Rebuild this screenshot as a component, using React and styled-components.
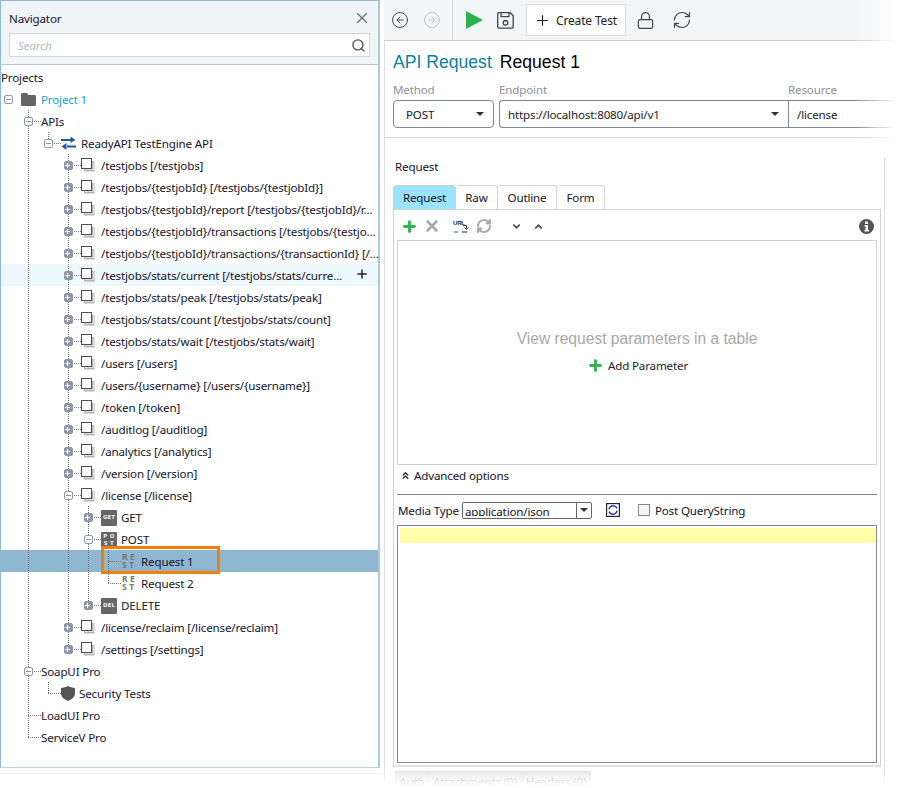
import React from 'react';
import styled, { createGlobalStyle, css } from 'styled-components';
import { X, Search, Plus, Lock, RefreshCw, CircleArrowLeft, CircleArrowRight, ChevronDown, ChevronUp, ChevronsUp } from 'lucide-react';

const GlobalStyle = createGlobalStyle`
  html, body { margin: 0; padding: 0; background: #fff; }
  body { font-family: "Noto Sans", "Open Sans", sans-serif; font-size: 11.6px; letter-spacing: -0.16px; color: #14142a; }
`;

const dots = '#777';
const vLine = `repeating-linear-gradient(to bottom, ${dots} 0 1px, transparent 1px 2px)`;
const hLine = `repeating-linear-gradient(to right, ${dots} 0 1px, transparent 1px 2px)`;

const Page = styled.div`
  position: relative;
  width: 901px;
  height: 788px;
  overflow: hidden;
  display: flex;
  background: #fff;
`;

/* navigator */
const Navigator = styled.aside`
  width: 380px;
  height: 768px;
  flex: none;
  box-sizing: border-box;
  border: 1px solid #8fb9d4;
  border-bottom-color: #b9d2e2;
  border-right-width: 2px;
  border-right-color: #a9cade;
  box-shadow: 0 5px 0 #fff, 0 6px 0 #e8e8e8;
  display: flex;
  flex-direction: column;
`;
const NavHead = styled.header`
  height: 64px;
  flex: none;
  box-sizing: border-box;
  background: #f2f5f8;
  border-bottom: 1px solid #b7c7d3;
  padding: 8px 8px 0;
`;
const NavTitleRow = styled.div`
  display: flex;
  justify-content: space-between;
  align-items: center;
  height: 18px;
  margin-bottom: 6px;
  svg { margin-right: -1px; color: #666; }
`;
const SearchBox = styled.div`
  height: 24px;
  box-sizing: border-box;
  background: #fff;
  border: 1px solid #d0d6db;
  display: flex;
  align-items: center;
  justify-content: space-between;
  padding: 0 3px 0 8px;
  color: #b5b8bc;
  font-style: italic;
  svg { color: #555; }
`;
const ProjectsLabel = styled.div`
  height: 23px;
  flex: none;
  line-height: 25px;
`;
const Tree = styled.div`
  display: flex;
  flex-direction: column;
`;
const Row = styled.div`
  position: relative;
  height: 22px;
  flex: none;
  display: flex;
  align-items: center;
  padding-left: 7px;
  white-space: nowrap;
  background: ${p => (p.$selected ? '#8eb6d0' : p.$hover ? '#ecf8fc' : 'transparent')};
`;
const Guide = styled.span`
  width: 20px;
  height: 22px;
  flex: none;
  ${p => p.$on && css`
    background: ${vLine} 0 0 / 1px 100% no-repeat;
  `}
`;
const Node = styled.span`
  width: 13px;
  height: 22px;
  flex: none;
  display: flex;
  align-items: center;
  background:
    ${hLine} 0 11px / 13px 1px no-repeat,
    ${vLine} 0 0 / 1px ${p => (p.$last ? '11px' : '100%')} no-repeat;
  ${p => p.$root && css`background: none;`}
`;
const Expander = styled.span`
  width: 9px;
  height: 9px;
  margin-left: -4px;
  box-sizing: border-box;
  border-radius: 2px;
  display: flex;
  align-items: center;
  justify-content: center;
  background: ${p => (p.$open ? '#fff' : '#8e97a8')};
  border: 1px solid #8e97a8;
  &::after {
    content: '';
    width: 5px;
    height: 1px;
    background: ${p => (p.$open ? '#8e97a8' : '#fff')};
  }
  ${p => !p.$open && css`
    &::before {
      content: '';
      width: 1px;
      height: 5px;
      background: #fff;
      margin-right: -3px;
    }
  `}
`;
const IconSlot = styled.span`
  width: ${p => (p.$tight ? 18 : 20)}px;
  height: 22px;
  flex: none;
  display: flex;
  align-items: center;
`;
const Badge = styled.span`
  width: 16px;
  height: 16px;
  flex: none;
  border-radius: 1px;
  background: #666;
  color: #eee;
  font: bold 5.5px/7px "DejaVu Sans", sans-serif;
  letter-spacing: ${p => (p.$spaced ? '2.5px' : '0')};
  white-space: normal;
  display: block;
  text-align: center;
  margin-top: 1px;
  padding: ${p => (p.$spaced ? '1px 0 0 2px' : '4px 0 0')};
  box-sizing: border-box;
`;
const RestMark = styled.span`
  width: 14px;
  font: bold 8.5px/8px "Noto Sans", sans-serif;
  letter-spacing: 2.5px;
  white-space: normal;
  color: #777;
  margin-left: 1px;
`;
const Label = styled.span`
  color: ${p => (p.$accent ? '#12a4c4' : 'inherit')};
`;
const AddButton = styled.span`
  position: absolute;
  right: 9px;
  top: 3px;
  display: flex;
  color: #222;
`;
const Callout = styled.span`
  position: absolute;
  left: 100px;
  top: -4px;
  width: 119px;
  height: 28px;
  box-sizing: border-box;
  border: 3px solid #f57f06;
  pointer-events: none;
`;

/* right side */
const Main = styled.main`
  flex: 1;
  margin-left: 4px;
  display: flex;
  flex-direction: column;
  min-width: 0;
`;
const Toolbar = styled.div`
  height: 41px;
  flex: none;
  box-sizing: border-box;
  background: #f4f5f7;
  border-bottom: 1px solid #ccc;
  display: flex;
  align-items: center;
`;
const NavButtons = styled.div`
  width: 69px;
  height: 40px;
  box-sizing: border-box;
  border-right: 1px solid #d5d7da;
  display: flex;
  align-items: center;
  gap: 14px;
  padding-left: 7px;
  margin-right: 13px;
`;
const CreateButton = styled.div`
  width: 100px;
  height: 32px;
  box-sizing: border-box;
  background: #fff;
  border: 1px solid #dfe1e4;
  display: flex;
  align-items: center;
  gap: 5px;
  padding-left: 7px;
  font-size: 12px;
  margin: 0 10px 0 12px;
  color: #222;
`;
const ToolIcon = styled.span`
  display: flex;
  margin-right: ${p => p.$gap || 0}px;
  color: #444;
`;
const RequestHead = styled.section`
  height: 97px;
  flex: none;
  box-sizing: border-box;
  border-bottom: 1px solid #d4d4d4;
  border-left: 1px solid #ddd;
  padding: 11px 0 0 8px;
`;
const Heading = styled.div`
  display: flex;
  gap: 8px;
  font: 17.6px/20px "Liberation Sans", Arial, sans-serif;
  letter-spacing: 0;
  color: #000;
  height: 22px;
  margin-bottom: 8px;
`;
const HeadingKind = styled.span`
  color: #0e7f98;
`;
const Fields = styled.div`
  display: grid;
  grid-template-columns: 101px 294px 1fr;
`;
const FieldLabel = styled.div`
  color: #8d8f9c;
  height: 18px;
  line-height: 16px;
  margin-left: ${p => p.$inset || 0}px;
`;
const Select = styled.div`
  height: 28px;
  box-sizing: border-box;
  border: 1px solid #7d8797;
  border-radius: ${p => p.$radius || '4px'};
  border-right-width: ${p => (p.$open ? 0 : 1)}px;
  display: flex;
  align-items: center;
  justify-content: space-between;
  padding: 0 9px 0 ${p => p.$pad || 8}px;
  color: #222;
  margin-left: ${p => p.$inset || 0}px;
`;
const Caret = styled.span`
  width: 0;
  height: 0;
  border-left: 4px solid transparent;
  border-right: 4px solid transparent;
  border-top: 4px solid #333;
`;
const Workspace = styled.section`
  flex: none;
  display: flex;
  flex-direction: column;
  width: 501px;
  box-sizing: border-box;
  border-left: 1px solid #ddd;
  padding: 20px 0 0 8px;
  background: linear-gradient(#ddd, #ddd) right 20px / 1px 100% no-repeat;
  & > * { flex: none; }
`;
const SectionTitle = styled.div`
  height: 18px;
  line-height: 18px;
  padding-left: 2px;
  margin-bottom: 9px;
`;
const Tabs = styled.div`
  display: flex;
  height: 24px;
`;
const Tab = styled.div`
  box-sizing: border-box;
  width: ${p => p.$w}px;
  border: 1px solid #d2d2d2;
  border-bottom: 0;
  border-left-width: ${p => (p.$active ? 1 : 0)}px;
  border-radius: 3px 3px 0 0;
  background: ${p => (p.$active ? '#9ce3fd' : '#fff')};
  display: flex;
  align-items: center;
  justify-content: center;
`;
const TabBody = styled.div`
  width: 488px;
  height: 558px;
  box-sizing: border-box;
  border: 1px solid #d2d2d2;
  border-bottom: 2px solid #e2e2e2;
  padding: 0 3px;
`;
const MiniBar = styled.div`
  height: 30px;
  box-sizing: border-box;
  padding: 2px 0 0 4px;
  display: flex;
  align-items: center;
`;
const MiniIcon = styled.span`
  display: flex;
  width: ${p => p.$w || 22}px;
  color: ${p => p.$color || '#666'};
`;
const MiniSpacer = styled.span`
  flex: 1;
`;
const Params = styled.div`
  height: 225px;
  box-sizing: border-box;
  border: 1px solid #d2d2d2;
  display: flex;
  flex-direction: column;
  align-items: center;
  padding-top: 87px;
`;
const Hint = styled.div`
  font: 15.6px/22px "Liberation Sans", Arial, sans-serif;
  letter-spacing: 0;
  color: #a9a9a9;
  height: 24px;
  margin-bottom: 3px;
`;
const AddParam = styled.div`
  display: flex;
  align-items: center;
  gap: 4px;
  height: 20px;
  color: #222;
  padding-left: 1px;
`;
const Advanced = styled.div`
  height: 30px;
  box-sizing: border-box;
  border-bottom: 1px solid #888;
  display: flex;
  align-items: flex-start;
  padding: 2px 0 0 3px;
  gap: 3px;
  line-height: 18px;
  svg { margin-top: 3px; color: #333; }
`;
const MediaRow = styled.div`
  height: 30px;
  box-sizing: border-box;
  display: flex;
  align-items: center;
  padding: 0 0 0 1px;
`;
const Combo = styled.div`
  width: 130px;
  height: 17px;
  box-sizing: border-box;
  margin: 0 14px 0 3px;
  border: 1px solid #666;
  border-radius: 2px;
  display: flex;
  overflow: hidden;
`;
const ComboText = styled.span`
  flex: 1;
  line-height: 18px;
  height: 13px;
  overflow: hidden;
  padding-left: 2px;
`;
const ComboButton = styled.span`
  width: 14px;
  border-left: 1px solid #666;
  display: flex;
  align-items: center;
  justify-content: center;
`;
const Checkbox = styled.span`
  width: 12px;
  height: 12px;
  box-sizing: border-box;
  border: 1px solid #888;
  background: #f6f6f6;
  margin: 0 5px 0 18px;
`;
const Editor = styled.div`
  height: 238px;
  box-sizing: border-box;
  border: 1px solid #888;
  padding: 2px 1px 0 2px;
`;
const EditorLine = styled.div`
  height: 15px;
  background: #ffffaa;
`;
const BottomTabs = styled.div`
  display: flex;
  height: 18px;
  margin: 4px 0 0 2px;
`;
const BottomTab = styled.div`
  width: ${p => p.$w}px;
  box-sizing: border-box;
  border: 1px solid #ddd;
  border-left-width: ${p => (p.$first ? 1 : 0)}px;
  background: linear-gradient(#e4e4e4, #f4f4f4);
  text-align: center;
  color: #999;
  line-height: 20px;
`;
/* the screenshot is faded out towards its edges */
const FadeRight = styled.div`
  position: absolute;
  right: 0;
  top: 0;
  width: 48px;
  height: 140px;
  background: linear-gradient(to right, rgba(255, 255, 255, 0), #fff 90%);
`;
const FadeBottom = styled.div`
  position: absolute;
  left: 0;
  right: 0;
  bottom: 0;
  height: 20px;
  background: linear-gradient(rgba(255, 255, 255, 0), #fff 90%);
`;

const PageIcon = () => (
  <svg width="14" height="14" viewBox="0 0 14 14">
    <path d="M3 3h10.500v10.500H3z" fill="#b5b5b5" />
    <path d="M4 11.500h8.500V4" fill="none" stroke="#ddd" />
    <rect x="0.500" y="0.500" width="10" height="10" fill="#fff" stroke="#4d4d4d" />
  </svg>
);
const FolderIcon = () => (
  <svg width="15" height="13" viewBox="0 0 15 13">
    <path d="M0 1.500C0 .6.6 0 1.500 0H6l1.500 2H13.500C14.400 2 15 2.600 15 3.500v8c0 .9-.6 1.500-1.500 1.500h-12C.6 13 0 12.400 0 11.500z" fill="#646464" />
  </svg>
);
const SwapIcon = () => (
  <svg width="15" height="14" viewBox="0 0 15 14">
    <path d="M9.500 0.500l5 3.500-5 3zM0 3h10v2H0zM5.500 7l-5 3.500 5 3.500zM5 9.500h10v2H5z" fill="#1d5aa0" />
  </svg>
);
const ShieldIcon = () => (
  <svg width="14" height="15" viewBox="0 0 14 15">
    <path d="M7 0c2 1.200 4.400 1.800 7 2v5c0 3.800-2.800 6.400-7 8C2.800 13.400 0 10.800 0 7V2c2.600-.2 5-.8 7-2z" fill="#555" />
  </svg>
);
const PlayIcon = () => (
  <svg width="17" height="18" viewBox="0 0 17 18"><path d="M0 0l17 9-17 9z" fill="#2db14e" /></svg>
);
const SaveIcon = () => (
  <svg width="17" height="17" viewBox="0 0 17 17" fill="none" stroke="#444" strokeWidth="1.300">
    <path d="M1.700.7h11.500l3 3v11.200c0 .8-.5 1.300-1.300 1.300H2c-.8 0-1.300-.5-1.300-1.300V2c0-.8.3-1.300 1-1.300z" />
    <path d="M4 .7v4h8v-4" />
    <circle cx="8.500" cy="10.800" r="2.300" />
  </svg>
);
const UrlIcon = () => (
  <svg width="16" height="15" viewBox="0 0 16 15">
    <text x="0" y="6" fontFamily="Liberation Sans, sans-serif" fontWeight="bold" fontSize="6" fill="#223">URL</text>
    <path d="M10 6.500h3.500v3" fill="none" stroke="#333" />
    <path d="M11.500 8.500l2 2 2-2" fill="none" stroke="#333" />
    <path d="M1 13h4" stroke="#2a9a3a" strokeWidth="1.200" />
    <path d="M9 13h5" stroke="#2233cc" strokeWidth="1.200" />
  </svg>
);
const SyncIcon = () => (
  <svg width="14" height="14" viewBox="0 0 24 24" fill="none">
    <rect x="1" y="1" width="22" height="22" fill="#fff" stroke="#223" strokeWidth="2" />
    <path d="M5 11a7 7 0 0 1 12-4l2 2M19 13a7 7 0 0 1-12 4l-2-2" stroke="#2a3a9a" strokeWidth="2.500" />
  </svg>
);
const InfoIcon = () => (
  <svg width="15" height="15" viewBox="0 0 15 15">
    <circle cx="7.500" cy="7.500" r="7.500" fill="#555" />
    <rect x="6" y="2.500" width="3" height="2.500" fill="#fff" />
    <path d="M5.500 6h3.500v5h1v1.500H5.500V11h1V7.500h-1z" fill="#fff" />
  </svg>
);
const ChunkyPlus = () => <Plus size={17} strokeWidth={4} color="#2eb34f" />;

const full = [0, 1, 0];
const rows = [
  { depth: 0, root: true, open: true, icon: 'folder', text: 'Project 1', accent: true, guides: [] },
  { depth: 1, open: true, text: 'APIs', guides: [0] },
  { depth: 2, open: true, last: true, icon: 'swap', text: 'ReadyAPI TestEngine API', guides: [0, 1] },
  { depth: 3, closed: true, icon: 'page', text: '/testjobs [/testjobs]', guides: full },
  { depth: 3, closed: true, icon: 'page', text: '/testjobs/{testjobId} [/testjobs/{testjobId}]', guides: full },
  { depth: 3, closed: true, icon: 'page', text: '/testjobs/{testjobId}/report [/testjobs/{testjobId}/r...', guides: full },
  { depth: 3, closed: true, icon: 'page', text: '/testjobs/{testjobId}/transactions [/testjobs/{testjo...', guides: full },
  { depth: 3, closed: true, icon: 'page', text: '/testjobs/{testjobId}/transactions/{transactionId} [/...', guides: full },
  { depth: 3, closed: true, icon: 'page', text: '/testjobs/stats/current [/testjobs/stats/curre...', guides: full, hover: true },
  { depth: 3, closed: true, icon: 'page', text: '/testjobs/stats/peak [/testjobs/stats/peak]', guides: full },
  { depth: 3, closed: true, icon: 'page', text: '/testjobs/stats/count [/testjobs/stats/count]', guides: full },
  { depth: 3, closed: true, icon: 'page', text: '/testjobs/stats/wait [/testjobs/stats/wait]', guides: full },
  { depth: 3, closed: true, icon: 'page', text: '/users [/users]', guides: full },
  { depth: 3, closed: true, icon: 'page', text: '/users/{username} [/users/{username}]', guides: full },
  { depth: 3, closed: true, icon: 'page', text: '/token [/token]', guides: full },
  { depth: 3, closed: true, icon: 'page', text: '/auditlog [/auditlog]', guides: full },
  { depth: 3, closed: true, icon: 'page', text: '/analytics [/analytics]', guides: full },
  { depth: 3, closed: true, icon: 'page', text: '/version [/version]', guides: full },
  { depth: 3, open: true, icon: 'page', text: '/license [/license]', guides: full },
  { depth: 4, closed: true, icon: 'get', text: 'GET', guides: [0, 1, 0, 1] },
  { depth: 4, open: true, icon: 'post', text: 'POST', guides: [0, 1, 0, 1] },
  { depth: 5, icon: 'rest', text: 'Request 1', guides: [0, 1, 0, 1, 1], selected: true },
  { depth: 5, last: true, icon: 'rest', text: 'Request 2', guides: [0, 1, 0, 1, 1] },
  { depth: 4, last: true, closed: true, icon: 'del', text: 'DELETE', guides: [0, 1, 0, 1] },
  { depth: 3, closed: true, icon: 'page', text: '/license/reclaim [/license/reclaim]', guides: full },
  { depth: 3, closed: true, last: true, icon: 'page', text: '/settings [/settings]', guides: full },
  { depth: 1, open: true, text: 'SoapUI Pro', guides: [0] },
  { depth: 2, last: true, icon: 'shield', tight: true, text: 'Security Tests', guides: [0, 1] },
  { depth: 1, text: 'LoadUI Pro', guides: [0] },
  { depth: 1, last: true, text: 'ServiceV Pro', guides: [0] },
];

const rowIcon = name => {
  switch (name) {
    case 'folder': return <FolderIcon />;
    case 'swap': return <SwapIcon />;
    case 'page': return <PageIcon />;
    case 'shield': return <ShieldIcon />;
    case 'get': return <Badge>GET</Badge>;
    case 'del': return <Badge>DEL</Badge>;
    case 'post': return <Badge $spaced>PO ST</Badge>;
    case 'rest': return <RestMark>RE ST</RestMark>;
    default: return null;
  }
};

const TreeRow = ({ row }) => (
  <Row $selected={row.selected} $hover={row.hover}>
    {row.guides.map((on, i) => <Guide key={i} $on={on} />)}
    <Node $last={row.last} $root={row.root}>
      {(row.open || row.closed) && <Expander $open={row.open} />}
    </Node>
    {row.icon && <IconSlot $tight={row.tight}>{rowIcon(row.icon)}</IconSlot>}
    <Label $accent={row.accent}>{row.text}</Label>
    {row.hover && <AddButton><Plus size={14} strokeWidth={2.500} /></AddButton>}
    {row.selected && <Callout />}
  </Row>
);

export default function App() {
  return (
    <Page>
      <GlobalStyle />
      <Navigator>
        <NavHead>
          <NavTitleRow>
            Navigator
            <X size={18} strokeWidth={1.500} />
          </NavTitleRow>
          <SearchBox>
            Search
            <Search size={15} strokeWidth={2.200} />
          </SearchBox>
        </NavHead>
        <ProjectsLabel>Projects</ProjectsLabel>
        <Tree>
          {rows.map(row => <TreeRow key={row.text} row={row} />)}
        </Tree>
      </Navigator>

      <Main>
        <Toolbar>
          <NavButtons>
            <CircleArrowLeft size={18} strokeWidth={1.300} color="#444" />
            <CircleArrowRight size={18} strokeWidth={1.300} color="#bbc3cc" />
          </NavButtons>
          <ToolIcon $gap={14}><PlayIcon /></ToolIcon>
          <ToolIcon><SaveIcon /></ToolIcon>
          <CreateButton>
            <Plus size={17} strokeWidth={1.500} />
            Create Test
          </CreateButton>
          <ToolIcon $gap={17}><Lock size={19} strokeWidth={1.500} /></ToolIcon>
          <ToolIcon><RefreshCw size={20} strokeWidth={1.400} /></ToolIcon>
        </Toolbar>

        <RequestHead>
          <Heading>
            <HeadingKind>API Request</HeadingKind>
            Request 1
          </Heading>
          <Fields>
            <FieldLabel>Method</FieldLabel>
            <FieldLabel $inset={5}>Endpoint</FieldLabel>
            <FieldLabel>Resource</FieldLabel>
            <Select $pad={12}>POST<Caret /></Select>
            <Select $inset={5} $radius="4px 0 0 4px" $open>https://localhost:8080/api/v1<Caret /></Select>
            <Select $radius="0" $pad={8}>/license</Select>
          </Fields>
        </RequestHead>

        <Workspace>
          <SectionTitle>Request</SectionTitle>
          <Tabs>
            <Tab $w={63} $active>Request</Tab>
            <Tab $w={42}>Raw</Tab>
            <Tab $w={59}>Outline</Tab>
            <Tab $w={48}>Form</Tab>
          </Tabs>
          <TabBody>
            <MiniBar>
              <MiniIcon><ChunkyPlus /></MiniIcon>
              <MiniIcon $w={30} $color="#aaa"><X size={18} strokeWidth={3.500} /></MiniIcon>
              <MiniIcon $w={23}><UrlIcon /></MiniIcon>
              <MiniIcon $w={35} $color="#aaa"><RefreshCw size={16} strokeWidth={3.200} /></MiniIcon>
              <MiniIcon $color="#555"><ChevronDown size={11} strokeWidth={4} /></MiniIcon>
              <MiniIcon $color="#555"><ChevronUp size={11} strokeWidth={4} /></MiniIcon>
              <MiniSpacer />
              <MiniIcon $w={18}><InfoIcon /></MiniIcon>
            </MiniBar>
            <Params>
              <Hint>View request parameters in a table</Hint>
              <AddParam><ChunkyPlus />Add Parameter</AddParam>
            </Params>
            <Advanced><ChevronsUp size={11} strokeWidth={3} />Advanced options</Advanced>
            <MediaRow>
              Media Type
              <Combo>
                <ComboText>application/json</ComboText>
                <ComboButton><Caret /></ComboButton>
              </Combo>
              <SyncIcon />
              <Checkbox />
              Post QueryString
            </MediaRow>
            <Editor><EditorLine /></Editor>
          </TabBody>
          <BottomTabs>
            <BottomTab $w={34} $first>Auth</BottomTab>
            <BottomTab $w={93}>Attachments (0)</BottomTab>
            <BottomTab $w={69}>Headers (0)</BottomTab>
          </BottomTabs>
        </Workspace>
      </Main>
      <FadeRight />
      <FadeBottom />
    </Page>
  );
}
